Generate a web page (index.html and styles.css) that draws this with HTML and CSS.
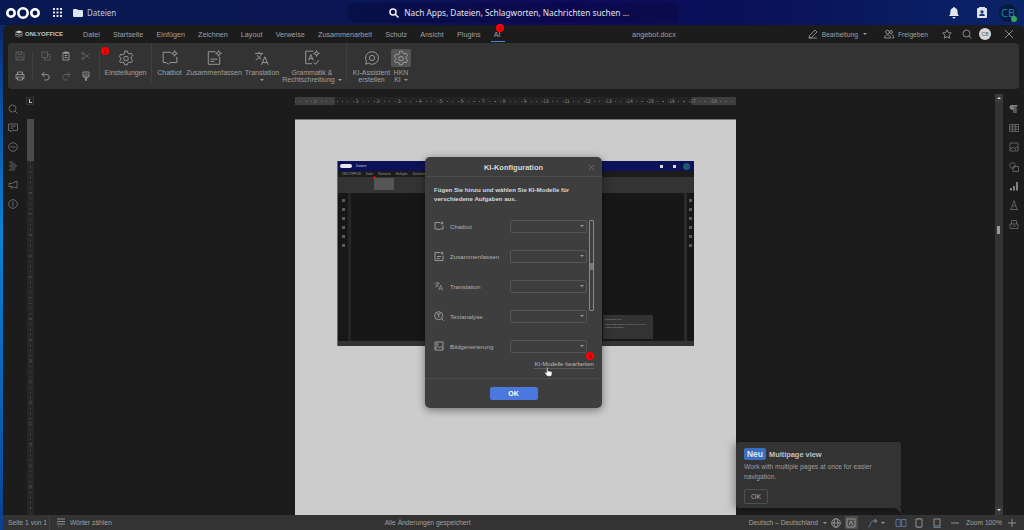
FILE: index.html
```html
<!DOCTYPE html>
<html lang="de">
<head>
    <meta charset="UTF-8">
    <meta name="viewport" content="width=device-width, initial-scale=1.0">
    <title>angebot.docx - Nextcloud</title>
    <link rel="stylesheet" href="styles.css">
</head>
<body>
    <header class="nc-header">
        <svg class="nc-logo" viewBox="0 0 34 14"><g fill="none" stroke="#fff" stroke-width="2.6"><circle cx="5" cy="7" r="3.7"/><circle cx="17" cy="7" r="4.7"/><circle cx="29" cy="7" r="3.7"/></g></svg>
        <svg class="nc-grid" viewBox="0 0 9 9" fill="#e4e8f4"><rect width="2" height="2"/><rect x="3.5" width="2" height="2"/><rect x="7" width="2" height="2"/><rect y="3.5" width="2" height="2"/><rect x="3.5" y="3.5" width="2" height="2"/><rect x="7" y="3.5" width="2" height="2"/><rect y="7" width="2" height="2"/><rect x="3.5" y="7" width="2" height="2"/><rect x="7" y="7" width="2" height="2"/></svg>
        <svg class="nc-folder" viewBox="0 0 10 8" fill="#dfe4f2"><path d="M0 1a1 1 0 0 1 1-1h3l1 1h4a1 1 0 0 1 1 1v5a1 1 0 0 1-1 1H1a1 1 0 0 1-1-1z"/></svg>
        <span class="nc-app">Dateien</span>
        <div class="nc-search">
            <svg viewBox="0 0 10 10" fill="none" stroke="#f0f0f0" stroke-width="1.5"><circle cx="4" cy="4" r="3"/><path d="M6.2 6.2 9.5 9.5"/></svg>
            <span>Nach Apps, Dateien, Schlagworten, Nachrichten suchen ...</span>
        </div>
        <div class="nc-right">
            <svg class="nc-icon" viewBox="0 0 10 12" fill="#e3e6ee"><path d="M5 0a1 1 0 0 1 1 1c2 .5 2.6 2 2.6 4 0 2 .6 3 1.4 4H0c.8-1 1.400-2 1.400-4 0-2 .6-3.500 2.600-4a1 1 0 0 1 1-1zM3.500 10h3a1.500 1.500 0 0 1-3 0z"/></svg>
            <svg class="nc-icon" viewBox="0 0 10 12"><rect y="1" width="10" height="10" rx="1" fill="#dfe3ee"/><circle cx="5" cy="4.800" r="1.600" fill="#17306e"/><path d="M2 9c.3-1.800 1.500-2.300 3-2.300S7.700 7.200 8 9z" fill="#17306e"/><rect x="2" width="6" height="1" fill="#dfe3ee"/></svg>
            <div class="nc-avatar">CB<i class="nc-status"></i></div>
        </div>
    </header>

    <div class="app">
        <div class="tab-row">
            <div class="brand">
                <svg viewBox="0 0 10 9" fill="#c8c8c8"><path d="M5 0 10 2 5 4 0 2z"/><path d="M0 3.500 5 5.500 10 3.500V4.700L5 6.700 0 4.700z" opacity=".8"/><path d="M0 6 5 8 10 6V7L5 9 0 7z" opacity=".6"/></svg>
                <span>ONLYOFFICE</span>
            </div>
            <nav class="tabs">
                <span>Datei</span><span>Startseite</span><span>Einfügen</span><span>Zeichnen</span><span>Layout</span><span>Verweise</span><span>Zusammenarbeit</span><span>Schutz</span><span>Ansicht</span><span>Plugins</span>
                <span class="tab-active">AI<i class="badge badge-tab">1</i></span>
            </nav>
            <span class="doc-name">angebot.docx</span>
            <div class="doc-actions">
                <svg class="ico act-edit" viewBox="0 0 10 10"><path d="M1 9 1.500 6.500 7 1l2 2-5.500 5.500zM1 9h8"/></svg>
                <span>Bearbeitung</span>
                <i class="caret act-caret"></i>
                <svg class="ico act-share" viewBox="0 0 10 10"><circle cx="3.500" cy="3" r="1.800"/><circle cx="7" cy="3" r="1.500"/><path d="M.5 9c0-4 6-4 6 0zM7.500 5.500c1.300.2 2 1.300 2 3.500H8"/></svg>
                <span>Freigeben</span>
                <svg class="ico act-star" viewBox="0 0 10 10"><path d="M5 .8 6.300 3.600 9.300 4 7.100 6.100 7.700 9.200 5 7.700 2.300 9.200 2.900 6.100.7 4 3.700 3.600z"/></svg>
                <svg class="ico act-search" viewBox="0 0 10 10"><circle cx="4.500" cy="4.500" r="3.500"/><path d="M7 7 9.500 9.500"/></svg>
                <span class="mini-user">CB</span>
                <svg class="ico act-close" viewBox="0 0 10 10"><path d="M1 1 9 9M9 1 1 9"/></svg>
            </div>
        </div>

        <div class="toolbar">
            <div class="tb-group tb-first">
                <svg class="ico off" viewBox="0 0 10 10"><path d="M1 1h6.500L9 2.500V9H1zM3 1v2.500h3.500V1M2.800 9V6h4.400v3"/></svg>
                <svg class="ico" viewBox="0 0 10 10"><path d="M2.500 3.500V1h5v2.500M2.500 7.500H1v-4h8v4H7.500M2.500 6h5v3h-5z"/></svg>
            </div>
            <div class="tb-group tb-edit">
                <svg class="ico off" viewBox="0 0 10 10"><path d="M1 1h5.500v5.500H1zM3.500 6.500V9H9V3.500H6.500"/></svg>
                <svg class="ico" viewBox="0 0 10 10"><path d="M2 1.500h6V9H2zM3.500 1h3v1.500h-3zM3.500 4.500h3M3.500 6.500h3"/></svg>
                <svg class="ico off" viewBox="0 0 10 10"><circle cx="2" cy="2.500" r="1.200"/><circle cx="2" cy="7.500" r="1.200"/><path d="M3 3 9 7.500M3 7 9 2.500"/></svg>
                <svg class="ico" viewBox="0 0 10 10"><path d="M3.500 1 1 3.500 3.500 6M1 3.500h5a2.800 2.800 0 0 1 0 5.500H3"/></svg>
                <svg class="ico off" viewBox="0 0 10 10"><path d="M6.500 1 9 3.500 6.500 6M9 3.500H4a2.800 2.800 0 0 0 0 5.500h3"/></svg>
                <svg class="ico" viewBox="0 0 10 10"><path d="M2 1h6v4H2zM2 5l1 1.500h1.500V9.500h1V6.500H7L8 5M3.500 3h3"/></svg>
            </div>
            <div class="tb-btn tb-settings">
                <svg class="ico big" viewBox="0 0 14 14"><path d="M5.800 1h2.400l.4 1.700 1.300.7 1.700-.5 1.200 2.100-1.300 1.200v1.600l1.300 1.200-1.200 2.100-1.700-.5-1.300.7-.4 1.700H5.800l-.4-1.700-1.300-.7-1.700.5L1.200 9.800 2.500 8.600V7L1.200 5.800l1.200-2.100 1.700.5 1.300-.7z"/><circle cx="7" cy="7.500" r="2"/></svg>
                <span>Einstellungen</span>
                <i class="badge badge-settings">2</i>
            </div>
            <div class="tb-btn tb-chatbot">
                <svg class="ico big" viewBox="0 0 14 14"><path d="M8 2H1v9h3l1.500 1.500L7 11h6V6"/><path d="M11 .5 11.700 2.300 13.500 3 11.700 3.700 11 5.500 10.300 3.700 8.500 3 10.300 2.300z"/></svg>
                <span>Chatbot</span>
            </div>
            <div class="tb-btn tb-summary">
                <svg class="ico big" viewBox="0 0 14 14"><path d="M8.500 1.500H2v11h10V6M4 8h6M4 10h3.500"/><path d="M11 .5 11.700 2.300 13.500 3 11.700 3.700 11 5.500 10.300 3.700 8.500 3 10.300 2.300z"/></svg>
                <span>Zusammenfassen</span>
            </div>
            <div class="tb-btn tb-translate">
                <svg class="ico big" viewBox="0 0 14 14"><path d="M1 3h7M4.500 1.500V3M6.500 3c-.5 2.500-2.500 4.500-5 5.500M2.800 4.500c.7 1.500 2 2.800 3.500 3.500M6.500 13l3-7 3 7M7.500 11h4"/></svg>
                <span>Translation</span>
                <i class="caret"></i>
            </div>
            <div class="tb-btn tb-grammar">
                <svg class="ico big" viewBox="0 0 14 14"><path d="M8 1H1.500v11H7M4 9l2-5 2 5M4.800 7.500h2.400M8.500 11l1.500 1.500 3-3.500"/><path d="M11 .5 11.700 2.300 13.500 3 11.700 3.700 11 5.500 10.300 3.700 8.500 3 10.300 2.300z"/></svg>
                <span>Grammatik &amp;<br>Rechtschreibung<i class="caret inline"></i></span>
            </div>
            <div class="tb-btn tb-assist">
                <svg class="ico big" viewBox="0 0 14 14"><path d="M7 1.500a5.500 5.500 0 1 1-3 10l-2.500 1 .6-2.700A5.500 5.500 0 0 1 7 1.500z"/><circle cx="7" cy="7" r="2.300"/></svg>
                <span>KI-Assistent<br>erstellen</span>
            </div>
            <div class="tb-btn tb-hkn">
                <span class="tb-active">
                    <svg class="ico big" viewBox="0 0 14 14"><path d="M5.800 1h2.400l.4 1.700 1.300.7 1.700-.5 1.200 2.100-1.300 1.200v1.600l1.300 1.200-1.200 2.100-1.700-.5-1.300.7-.4 1.700H5.800l-.4-1.700-1.300-.7-1.700.5L1.200 9.800 2.500 8.600V7L1.200 5.800l1.200-2.100 1.700.5 1.300-.7z"/><circle cx="7" cy="7.500" r="2"/></svg>
                </span>
                <span>HKN<br>KI<i class="caret inline"></i></span>
            </div>
        </div>

        <div class="work">
            <aside class="left-bar">
                <svg class="ico" viewBox="0 0 10 10"><circle cx="4.500" cy="4.500" r="3.500"/><path d="M7 7 9.500 9.500"/></svg>
                <svg class="ico" viewBox="0 0 10 10"><path d="M.5 1h9v6.500H4L2.500 9V7.500h-2zM2.500 3.200h5M2.500 5.200h3"/></svg>
                <svg class="ico" viewBox="0 0 10 10"><circle cx="5" cy="5" r="4.300"/><path d="M2.500 5h5"/></svg>
                <svg class="ico" viewBox="0 0 10 10"><path d="M1 1h4M2.500 3h5M1 5h8M2.500 7h5M1 9h6"/></svg>
                <svg class="ico" viewBox="0 0 10 10"><path d="M9 1v7L3.500 6.500H1v-3h2.500zM3 6.500 4 9"/></svg>
                <svg class="ico" viewBox="0 0 10 10"><circle cx="5" cy="5" r="4.300"/><path d="M5 2.500v5"/></svg>
            </aside>
            <div class="v-ruler-col">
                <i class="ruler-corner"></i>
                <div class="v-ruler">
                    <div class="v-ruler-dark"></div>
                    <div class="v-ruler-nums"><span>1</span><span>2</span><span>3</span><span>4</span><span>5</span><span>6</span><span>7</span><span>8</span><span>9</span><span>10</span><span>11</span><span>12</span><span>13</span><span>14</span><span>15</span><span>16</span></div>
                </div>
            </div>
            <main class="canvas">
                <div class="h-ruler">
                    <span>1</span><span></span><span>1</span><span>2</span><span>3</span><span>4</span><span>5</span><span>6</span><span>7</span><span>8</span><span>9</span><span>10</span><span>11</span><span>12</span><span>13</span><span>14</span><span>15</span><span>16</span><span>17</span><span>18</span>
                </div>
                <div class="page">
                    <div class="shot">
                        <div class="shot-head"><b class="shot-logo"></b><span>Dateien</span><i class="shot-ico"></i><i class="shot-ico"></i><i class="shot-avatar"></i></div>
                        <div class="shot-tabs"><span>ONLYOFFICE</span><span>Datei</span><span>Startseite</span><span>Einfügen</span><span>Zeichnen</span><span>Layout</span></div>
                        <div class="shot-tools"><i class="shot-dot"></i><span class="shot-sel"></span></div>
                        <div class="shot-body">
                            <div class="shot-left"><i></i><i></i><i></i><i></i><i></i><i></i></div>
                            <div class="shot-vruler"></div>
                            <div class="shot-right"><i></i><i></i><i></i><i></i><i></i><i></i></div>
                            <div class="shot-toast"><span>Multipage view</span><span>Work with multiple pages at once for easier navigation.</span></div>
                        </div>
                        <div class="shot-status"></div>
                    </div>
                </div>
            </main>
            <div class="scrollbar">
                <i class="sb-arrow"></i>
                <i class="sb-thumb"></i>
                <i class="sb-arrow sb-down"></i>
            </div>
            <aside class="right-bar">
                <svg class="ico fill" viewBox="0 0 10 10"><path d="M2 1h6.500v1.300H7.500V9H6.300V2.300H5.500V9H4.300V5.500A2.300 2.300 0 0 1 2 1z"/></svg>
                <svg class="ico" viewBox="0 0 10 10"><path d="M.5 1.500h9v7h-9zM.5 3.800h9M.5 6.200h9M3.500 1.500v7M6.500 1.500v7"/></svg>
                <svg class="ico" viewBox="0 0 10 10"><path d="M1 1h8v8H1zM1 7.500 4 5l3 3M6 6l1.500-1L9 6.500"/></svg>
                <svg class="ico" viewBox="0 0 10 10"><circle cx="3.500" cy="3.500" r="2.800"/><path d="M4 4.500h5.500v5H4z"/></svg>
                <svg class="ico fill" viewBox="0 0 10 10"><path d="M1 7h2v2.500H1zM4 5h2v4.500H4zM7 1h2v8.500H7z"/></svg>
                <svg class="ico" viewBox="0 0 10 10"><path d="M2 9.500 5 .5l3 9M3.200 6h3.600M1 9.500h8"/></svg>
                <svg class="ico" viewBox="0 0 10 10"><path d="M1 5h8v4.500H1zM2.500 5V1.500h5V5M3.500 7h3"/></svg>
            </aside>
        </div>

        <footer class="status-bar">
            <span class="st-page">Seite 1 von 1</span>
            <svg class="ico st-words" viewBox="0 0 10 10"><path d="M1 1h8M1 3.500h8M1 6h8"/><path class="blue" d="M2 8.500h1.500M5 8.500h1"/></svg>
            <span>Wörter zählen</span>
            <span class="st-saved">Alle Änderungen gespeichert</span>
            <div class="st-right">
                <span>Deutsch – Deutschland</span>
                <i class="caret"></i>
                <svg class="ico st-globe" viewBox="0 0 10 10"><circle cx="5" cy="5" r="4.300"/><ellipse cx="5" cy="5" rx="2" ry="4.300"/><path d="M.7 5h8.600"/></svg>
                <span class="st-spell"><svg class="ico" viewBox="0 0 10 10"><path d="M1 1h8v8H1zM3.300 7 5 3l1.700 4"/><path class="blue" d="M5.500 8 7 9.300 9.500 6.500"/></svg></span>
                <svg class="ico st-track" viewBox="0 0 10 10"><path class="blue" d="M1 9c3 0 2-6 5-6"/><path d="M6 3h3.500M8 1l1.500 2L8 5"/></svg>
                <i class="caret st-track-caret"></i>
                <svg class="ico st-view" viewBox="0 0 12 10"><path class="blue" d="M1 1.500h4.300v7H1zM6.700 1.500H11v7H6.700z"/></svg>
                <svg class="ico st-view2" viewBox="0 0 10 10"><path d="M2 1h6v8H2z"/><path class="blue" d="M3 .5h4M3 9.500h4"/></svg>
                <svg class="ico st-view3" viewBox="0 0 10 10"><path d="M2 1h6v7H2z"/><path class="blue" d="M1 9.500h8"/></svg>
                <svg class="ico st-minus" viewBox="0 0 10 10"><path d="M1 5h8"/></svg>
                <span>Zoom 100%</span>
                <svg class="ico st-plus" viewBox="0 0 10 10"><path d="M1 5h8M5 1v8"/></svg>
            </div>
        </footer>
    </div>

    <!-- dialog and toast lie over the document -->
    <section class="dialog">
        <div class="dlg-head">
            <span>KI-Konfiguration</span>
            <svg class="ico dlg-close" viewBox="0 0 10 10"><path d="M1 1 9 9M9 1 1 9"/></svg>
        </div>
        <p class="dlg-intro">Fügen Sie hinzu und wählen Sie KI-Modelle für verschiedene Aufgaben aus.</p>
        <div class="dlg-main">
            <div class="dlg-rows">
                <div class="dlg-row">
                    <svg class="ico" viewBox="0 0 10 10"><path d="M6 1.500H1v6.500h3l1 1 1-1h3V4.500"/><path d="M8 .5v3M6.500 2h3"/></svg>
                    <span>Chatbot</span><div class="select"><i class="caret"></i></div>
                </div>
                <div class="dlg-row">
                    <svg class="ico" viewBox="0 0 10 10"><path d="M6 1.500H1v8h8V4.500M3 5.500h4M3 7.500h2.500"/><path d="M8 .5v3M6.500 2h3"/></svg>
                    <span>Zusammenfassen</span><div class="select"><i class="caret"></i></div>
                </div>
                <div class="dlg-row">
                    <svg class="ico" viewBox="0 0 14 14"><path d="M1 3h7M4.500 1.500V3M6.500 3c-.5 2.500-2.500 4.500-5 5.500M2.800 4.500c.7 1.500 2 2.800 3.500 3.500M6.500 13l3-7 3 7M7.500 11h4"/></svg>
                    <span>Translation</span><div class="select"><i class="caret"></i></div>
                </div>
                <div class="dlg-row">
                    <svg class="ico" viewBox="0 0 10 10"><circle cx="4.700" cy="4.700" r="4"/><path d="M7.500 7.500 9.700 9.700M3 3h3.400M4.700 3v3.500"/></svg>
                    <span>Textanalyse</span><div class="select"><i class="caret"></i></div>
                </div>
                <div class="dlg-row">
                    <svg class="ico" viewBox="0 0 10 10"><path d="M1 1h8v8H1zM1 8l2.500-3 2 2L7 5.500 9 7.500"/><circle cx="3.300" cy="3.300" r=".8"/></svg>
                    <span>Bildgenerierung</span><div class="select"><i class="caret"></i></div>
                </div>
            </div>
            <div class="dlg-scroll"><i></i></div>
        </div>
        <div class="dlg-link-row">
            <span class="dlg-link">KI-Modelle bearbeiten</span>
            <i class="badge badge-link">3</i>
            <svg class="hand" viewBox="0 0 12 14"><path d="M3.500 1.200c0-1 1.600-1 1.600 0v4.300l4.400.9c1.200.3 1.500 1 1.400 2l-.5 3.100c-.2 1-.8 1.500-1.800 1.500H5.300c-.8 0-1.300-.3-1.800-1L1 8.700c-.7-1 .4-2 1.400-1.200l1.100 1z" fill="#fff" stroke="#222" stroke-width=".5"/></svg>
        </div>
        <div class="dlg-foot"><button class="btn-ok" type="button">OK</button></div>
    </section>

    <section class="toast">
        <div class="toast-title"><span class="tag-new">Neu</span><b>Multipage view</b></div>
        <p>Work with multiple pages at once for easier navigation.</p>
        <button class="toast-ok" type="button">OK</button>
    </section>
</body>
</html>
```

FILE: styles.css
```css
* {
    box-sizing: border-box;
}

html, body {
    height: 100%;
}

body {
    margin: 0;
    width: 1024px;
    height: 530px;
    overflow: hidden;
    position: relative;
    display: flex;
    flex-direction: column;
    font-family: 'Liberation Sans', Arial, sans-serif;
    font-size: 7px;
    color: #a0a0a0;
    background: linear-gradient(180deg, #0a1a52 0, #0b3f8f 70px, #0a82d6 230px, #0b62b6 400px, #0c3f90 530px);
}

svg {
    display: block;
    flex: none;
}

.ico {
    width: 10px;
    height: 10px;
    fill: none;
    stroke: #a6a6a6;
    stroke-width: 0.8;
}

.ico.big {
    width: 16px;
    height: 16px;
    stroke-width: 0.75;
}

.ico.off {
    stroke: #666;
}

.ico.fill {
    fill: #8a8a8a;
    stroke: none;
}

.ico .blue {
    stroke: #5f82b0;
}

.caret {
    display: inline-block;
    width: 0;
    height: 0;
    flex: none;
    border-left: 2px solid transparent;
    border-right: 2px solid transparent;
    border-top: 2px solid #999;
}

.caret.inline {
    margin-left: 3px;
    vertical-align: 1px;
}

.badge {
    position: absolute;
    width: 8px;
    height: 8px;
    border-radius: 50%;
    background: #f00;
    color: #600;
    font-size: 5px;
    font-style: normal;
    line-height: 8px;
    text-align: center;
}

/* nextcloud header */
.nc-header {
    height: 25px;
    flex: none;
    display: flex;
    align-items: center;
    font-family: 'Noto Sans', sans-serif;
    color: #e0e4f0;
    background: linear-gradient(90deg, #081850 0, #0a1654 35%, #0e0a5c 55%, #0a1258 75%, #0a2468 100%);
}

.nc-logo {
    width: 34px;
    height: 14px;
    margin-left: 6px;
}

.nc-grid {
    width: 9px;
    height: 9px;
    margin-left: 13px;
}

.nc-folder {
    width: 10px;
    height: 8px;
    margin-left: 11px;
}

.nc-app {
    margin-left: 4px;
    font-size: 8px;
    color: #c0c8de;
}

.nc-search {
    width: 331px;
    height: 20px;
    margin-left: 232px;
    padding-left: 41px;
    display: flex;
    align-items: center;
    gap: 5px;
    border-radius: 6px;
    background: rgba(8, 4, 48, 0.3);
    font-size: 8.3px;
}

.nc-search svg {
    width: 10px;
    height: 10px;
}

.nc-right {
    margin-left: auto;
    padding-right: 7px;
    display: flex;
    align-items: center;
}

.nc-icon {
    width: 10px;
    height: 12px;
    margin-right: 18px;
}

.nc-icon + .nc-icon {
    margin-right: 12px;
}

.nc-avatar {
    width: 18px;
    height: 18px;
    position: relative;
    border-radius: 50%;
    background: #061a3c;
    color: #1b7fbf;
    font-size: 11px;
    line-height: 18px;
    text-align: center;
}

.nc-status {
    position: absolute;
    right: 0;
    bottom: 0;
    width: 6px;
    height: 6px;
    border-radius: 50%;
    background: #3fa45a;
}

/* editor */
.app {
    flex: 1;
    min-height: 0;
    margin-left: 3px;
    display: flex;
    flex-direction: column;
    border-radius: 6px 6px 0 0;
    background: #1c1c1c;
}

.tab-row {
    height: 18px;
    flex: none;
    display: flex;
    align-items: center;
}

.brand {
    width: 80px;
    padding-left: 12px;
    display: flex;
    align-items: center;
    gap: 2px;
    flex: none;
    color: #c4c4c4;
    font-size: 6px;
    font-weight: bold;
}

.brand svg {
    width: 8px;
    height: 8px;
}

.tabs {
    display: flex;
    gap: 13.2px;
    font-size: 7.2px;
    white-space: nowrap;
}

.tab-active {
    position: relative;
}

.tab-active::after {
    content: "";
    position: absolute;
    left: -3px;
    right: -4px;
    top: 11px;
    height: 1px;
    background: #4a86d8;
}

.badge-tab {
    left: 2px;
    top: -6px;
}

.doc-name {
    position: absolute;
    left: 600px;
    width: 108px;
    text-align: center;
    font-size: 7.3px;
}

.doc-actions {
    margin-left: auto;
    display: flex;
    align-items: center;
    font-size: 6.7px;
    padding-right: 10px;
}

.act-edit {
    margin-right: 4px;
}

.act-caret {
    margin-left: 5px;
}

.act-share {
    margin-left: 17px;
    margin-right: 4px;
}

.act-star {
    margin-left: 14px;
}

.act-search {
    margin-left: 10px;
}

.mini-user {
    width: 12px;
    height: 12px;
    margin-left: 7px;
    border-radius: 50%;
    background: #d8d8d8;
    color: #555;
    font-size: 5px;
    line-height: 12px;
    text-align: center;
}

.act-close {
    margin-left: 13px;
}

/* ribbon */
.toolbar {
    height: 46px;
    flex: none;
    margin: 0 5px;
    display: flex;
    align-items: flex-start;
    border-radius: 4px;
    background: #333;
    position: relative;
}

.tb-group {
    height: 30px;
    margin-top: 8px;
    display: grid;
    align-items: center;
    justify-items: center;
    row-gap: 10px;
    border-right: 1px solid #3f3f3f;
}

.tb-first {
    width: 25px;
    grid-template-rows: 10px 10px;
}

.tb-edit {
    width: 67px;
    padding: 0 3px;
    grid-template-columns: repeat(3, 1fr);
    grid-template-rows: 10px 10px;
}

.tb-btn {
    flex: none;
    padding-top: 7px;
    display: flex;
    flex-direction: column;
    align-items: center;
    position: relative;
    text-align: center;
    font-size: 7px;
    line-height: 7px;
    white-space: nowrap;
}

.tb-btn > .ico, .tb-active {
    margin-bottom: 3px;
}

.tb-settings {
    width: 52px;
    height: 40px;
    border-right: 1px solid #3f3f3f;
}

.badge-settings {
    left: 1px;
    top: 4px;
}

.tb-chatbot {
    width: 35px;
}

.tb-summary {
    width: 54px;
}

.tb-translate {
    width: 42px;
}

.tb-translate .caret {
    margin-top: 3px;
}

.tb-grammar {
    width: 58px;
}

.tb-assist {
    width: 46px;
    height: 40px;
    margin-left: 5px;
    padding-left: 4px;
    border-left: 1px solid #3f3f3f;
}

.tb-hkn {
    width: 18px;
}

.tb-active {
    width: 20px;
    height: 18px;
    margin-top: -1px;
    margin-bottom: 2px;
    display: flex;
    flex: none;
    align-items: center;
    justify-content: center;
    border-radius: 2px;
    background: #555;
}

/* work area */
.work {
    flex: 1;
    min-height: 0;
    display: flex;
}

.left-bar {
    width: 22px;
    flex: none;
    padding-top: 15px;
    padding-left: 5px;
    display: flex;
    flex-direction: column;
    gap: 9px;
}

.left-bar .ico {
    stroke: #7a7a7a;
}

.v-ruler-col {
    width: 10px;
    flex: none;
    padding-top: 8px;
    display: flex;
    flex-direction: column;
    align-items: center;
}

.ruler-corner {
    width: 8px;
    height: 8px;
    margin-bottom: 14px;
    flex: none;
    border: 1px solid #333;
    background: linear-gradient(#bbb, #bbb) 2px 1px / 1px 4px no-repeat,
                linear-gradient(#bbb, #bbb) 2px 4px / 3px 1px no-repeat,
                #232323;
}

.v-ruler {
    flex: 1;
    width: 7px;
    overflow: hidden;
    font-size: 4px;
    color: #6a6a6a;
    background: repeating-linear-gradient(180deg, #555 0 1px, transparent 1px 5.25px) center / 1px 100% no-repeat, #262626;
}

.v-ruler-dark {
    height: 42px;
    background: #4a4a4a;
}

.v-ruler-nums span {
    display: block;
    width: 7px;
    height: 21px;
    line-height: 7px;
    text-align: center;
    writing-mode: vertical-rl;
    transform: rotate(180deg);
    background: #262626;
    background-clip: content-box;
    padding: 8px 0;
}

.canvas {
    flex: 1;
    min-width: 0;
    padding-top: 8px;
    padding-left: 260px;
    display: flex;
    flex-direction: column;
}

.h-ruler {
    width: 441px;
    height: 8px;
    flex: none;
    padding-left: 9.5px;
    display: flex;
    font-size: 5px;
    line-height: 8px;
    color: #777;
    background: repeating-linear-gradient(90deg, #666 0 1px, transparent 1px 5.25px) 0 center / 100% 1px no-repeat,
                linear-gradient(90deg, #3e3e3e 40px, #232323 40px, #232323 397px, #3e3e3e 397px);
}

.h-ruler span {
    width: 21px;
    flex: none;
    text-align: center;
}

.page {
    width: 441px;
    flex: 1;
    margin-top: 14px;
    padding: 41px 0 0 42px;
    border-top: 1px solid #777;
    background: #ccc;
}

/* screenshot pasted in the document */
.shot {
    width: 357px;
    height: 185px;
    display: flex;
    flex-direction: column;
    font-size: 3px;
    color: #999;
    background: #171717;
    border-left: 1px solid #0a82d6;
}

.shot-head {
    height: 10px;
    padding: 0 4px 0 2px;
    display: flex;
    flex: none;
    align-items: center;
    gap: 4px;
    color: #c8d0e4;
    background: #0d1258;
}

.shot-logo {
    width: 12px;
    height: 4px;
    border-radius: 2px;
    background: #e8e8e8;
}

.shot-ico {
    width: 3px;
    height: 3px;
    margin-left: 6px;
    background: #ddd;
}

.shot-head span + .shot-ico {
    margin-left: auto;
}

.shot-avatar {
    width: 7px;
    height: 7px;
    margin-left: 3px;
    border-radius: 50%;
    background: #1d5a6a;
}

.shot-tabs {
    height: 6px;
    padding-left: 4px;
    display: flex;
    flex: none;
    align-items: center;
    gap: 5px;
    background: #1c1c1c;
}

.shot-tools {
    height: 16px;
    flex: none;
    position: relative;
    background: #333;
}

.shot-dot {
    position: absolute;
    left: 35px;
    top: -1px;
    width: 3px;
    height: 3px;
    border-radius: 50%;
    background: #e00;
}

.shot-sel {
    position: absolute;
    left: 36px;
    top: 1px;
    width: 20px;
    height: 12px;
    background: #555;
}

.shot-body {
    flex: 1;
    display: flex;
    position: relative;
    background: #171717;
}

.shot-left, .shot-right {
    width: 10px;
    padding-top: 6px;
    display: flex;
    flex-direction: column;
    align-items: center;
    gap: 6px;
}

.shot-left i, .shot-right i {
    width: 3px;
    height: 3px;
    background: #5a5a5a;
}

.shot-vruler {
    width: 3px;
    background: #252525;
}

.shot-right {
    margin-left: auto;
    border-left: 3px solid #2a2a2a;
}

.shot-toast {
    position: absolute;
    right: 41px;
    bottom: 2px;
    width: 50px;
    height: 24px;
    padding: 3px 2px;
    display: flex;
    flex-direction: column;
    gap: 2px;
    font-size: 2.5px;
    background: #333;
}

.shot-status {
    height: 5px;
    flex: none;
    background: #333;
}

/* scrollbar and right side */
.scrollbar {
    width: 8px;
    flex: none;
    margin-top: 5px;
    margin-left: 8px;
    display: flex;
    flex-direction: column;
    background: #333;
}

.sb-arrow {
    height: 9px;
    flex: none;
    position: relative;
    background: #3a3a3a;
}

.sb-arrow::after {
    content: "";
    position: absolute;
    left: 2px;
    top: 3px;
    border-left: 2px solid transparent;
    border-right: 2px solid transparent;
    border-bottom: 2px solid #ddd;
}

.sb-down {
    margin-top: auto;
}

.sb-down::after {
    border-bottom: 0;
    border-top: 2px solid #ddd;
}

.sb-thumb {
    width: 3px;
    height: 8px;
    margin: 123px 0 0 2px;
    background: #999;
}

.right-bar {
    width: 21px;
    flex: none;
    padding-top: 15px;
    display: flex;
    flex-direction: column;
    align-items: center;
    gap: 9.2px;
}

.right-bar .ico {
    stroke: #707070;
}

.right-bar .ico.fill {
    fill: #808080;
    stroke: none;
}

/* status bar */
.status-bar {
    height: 15px;
    flex: none;
    display: flex;
    align-items: center;
    font-size: 6.7px;
    white-space: nowrap;
    background: #333;
}

.st-page {
    width: 47px;
    padding-left: 5px;
    border-right: 1px solid #3f3f3f;
    line-height: 15px;
}

.st-words {
    margin: 0 4px 0 6px;
}

.st-saved {
    margin-left: 273px;
}

.st-right {
    margin-left: auto;
    padding-right: 7px;
    display: flex;
    align-items: center;
}

.st-right > .caret {
    margin-left: 5px;
}

.st-right > .st-track-caret {
    margin-left: 4px;
}

.st-globe {
    margin-left: 4px;
}

.st-spell {
    width: 13px;
    height: 13px;
    margin-left: 4px;
    display: flex;
    align-items: center;
    justify-content: center;
    background: #4d4d4d;
}

.st-track {
    margin-left: 9px;
}

.st-view {
    width: 12px;
    margin-left: 10px;
}

.st-view2 {
    margin-left: 7px;
}

.st-view3 {
    margin-left: 8px;
}

.st-minus {
    margin: 0 6px 0 8px;
}

.st-plus {
    margin-left: 5px;
}

/* dialog */
.dialog {
    position: absolute;
    left: 425px;
    top: 157px;
    width: 177px;
    height: 251px;
    display: flex;
    flex-direction: column;
    border-radius: 5px;
    background: #3e3e3e;
    color: #b0b0b0;
    box-shadow: 0 2px 8px rgba(0, 0, 0, 0.45);
}

.dlg-head {
    height: 20px;
    flex: none;
    display: flex;
    align-items: center;
    justify-content: center;
    position: relative;
    padding-top: 2px;
    border-bottom: 1px solid #4c4c4c;
    font-size: 7.5px;
    font-weight: bold;
    color: #d8d8d8;
}

.dlg-close {
    position: absolute;
    right: 7px;
    top: 7px;
    width: 7px;
    height: 7px;
    stroke: #8a8a8a;
}

.dlg-intro {
    margin: 8px 9px 0;
    font-size: 6.1px;
    line-height: 9.3px;
    font-weight: bold;
    color: #d8d8d8;
}

.dlg-main {
    margin-top: 16px;
    padding-left: 9px;
    display: flex;
    align-items: flex-start;
}

.dlg-rows {
    width: 153px;
    flex: none;
    display: flex;
    flex-direction: column;
    gap: 17px;
}

.dlg-row {
    height: 13px;
    display: flex;
    align-items: center;
    font-size: 6.2px;
}

.dlg-row svg {
    margin-right: 6px;
    stroke: #b0b0b0;
}

.dlg-row span {
    flex: 1;
}

.select {
    width: 77px;
    height: 13px;
    padding-right: 2px;
    display: flex;
    align-items: center;
    justify-content: flex-end;
    border: 1px solid #555;
    border-radius: 2px;
}

.dlg-scroll {
    width: 5px;
    height: 91px;
    margin-left: 2px;
    position: relative;
    border: 1px solid #8a8a8a;
    border-radius: 1px;
}

.dlg-scroll i {
    position: absolute;
    left: 0;
    top: 42px;
    width: 3px;
    height: 7px;
    background: #777;
}

.dlg-link-row {
    height: 21px;
    margin-top: 4px;
    padding-right: 8px;
    display: flex;
    justify-content: flex-end;
    align-items: flex-start;
    position: relative;
}

.dlg-link {
    padding-top: 3px;
    height: 12px;
    border-bottom: 1px solid #5a5a5a;
    font-size: 6.1px;
    line-height: 8px;
    white-space: nowrap;
    color: #b8b8b8;
}

.badge-link {
    right: 8px;
    top: -5px;
}

.hand {
    position: absolute;
    left: 119px;
    top: 10px;
    width: 9px;
    height: 10px;
}

.dlg-foot {
    flex: 1;
    display: flex;
    justify-content: center;
    padding-top: 8px;
    border-top: 1px solid #4c4c4c;
}

.btn-ok {
    width: 48px;
    height: 13px;
    padding: 0;
    border: 0;
    border-radius: 2px;
    background: #4a78dc;
    color: #fff;
    font-family: inherit;
    font-size: 7px;
    font-weight: bold;
}

/* toast */
.toast {
    position: absolute;
    left: 736px;
    top: 442px;
    width: 165px;
    height: 66px;
    padding: 6px 8px;
    border-radius: 3px;
    background: #333;
    box-shadow: -2px 1px 8px rgba(0, 0, 0, 0.35);
    font-size: 6.7px;
    color: #9e9e9e;
}

.toast::after {
    content: "";
    position: absolute;
    right: 0;
    bottom: -5px;
    border-left: 5px solid transparent;
    border-top: 5px solid #333;
}

.toast-title {
    display: flex;
    align-items: center;
    gap: 3px;
    font-size: 7.4px;
    color: #c0c0c0;
}

.tag-new {
    width: 22px;
    height: 12px;
    border-radius: 2px;
    background: #3a6fbf;
    color: #dbe6f7;
    font-size: 8.5px;
    font-weight: bold;
    line-height: 12px;
    text-align: center;
}

.toast p {
    margin: 2px 0 0;
    line-height: 10.3px;
}

.toast-ok {
    width: 24px;
    height: 15px;
    margin-top: 6px;
    padding: 0;
    border: 1px solid #4f4f4f;
    border-radius: 2px;
    background: transparent;
    color: #a8a8a8;
    font-family: inherit;
    font-size: 7px;
}
```
